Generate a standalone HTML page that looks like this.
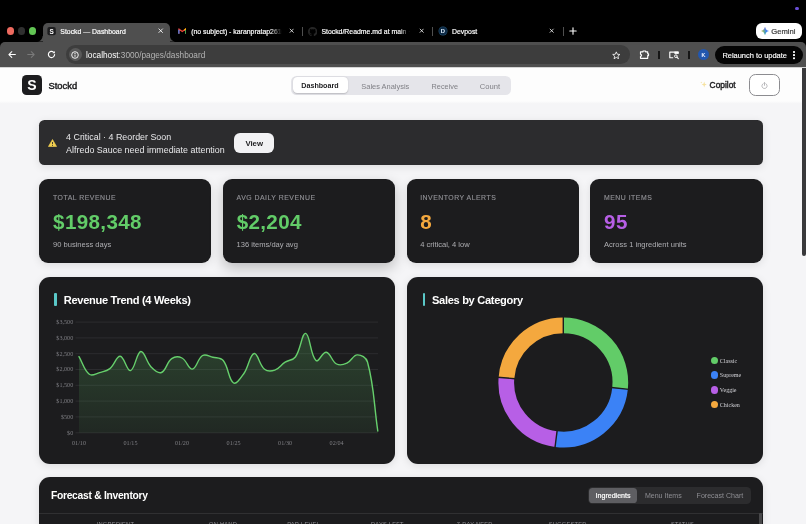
<!DOCTYPE html>
<html><head><meta charset="utf-8"><title>Stockd — Dashboard</title>
<style>
*{box-sizing:border-box;margin:0;padding:0}
html,body{width:806px;height:524px;overflow:hidden;background:#f5f5f7;font-family:"Liberation Sans",sans-serif;}
#root{position:relative;width:806px;height:524px;overflow:hidden;background:#f5f5f7}
.abs{position:absolute}
.t{position:absolute;white-space:nowrap;line-height:1}
#txt{position:absolute;left:0;top:0;width:806px;height:524px;will-change:transform;pointer-events:none}
/* chrome */
#topblack{left:0;top:0;width:806px;height:50px;background:#000}
#toolbar{left:0;top:42px;width:806px;height:25.5px;background:#4f4f4f;border-top-left-radius:5px;border-top-right-radius:5px}
#tab{left:42.8px;top:23.3px;width:127.2px;height:21.7px;background:#4f4f4f;border-radius:5px 5px 0 0}
.tabtxt{font-size:6.9px;color:#fff;top:28.9px;-webkit-text-stroke:.18px #fff}
.tl{position:absolute;width:7.4px;height:7.4px;border-radius:50%;top:27.2px}
#urlpill{left:66px;top:45.4px;width:564px;height:18.6px;border-radius:9.3px;background:#3d3d3d}
/* page */
#header{left:0;top:67px;width:806px;height:35.6px;background:#fdfdfd}
.card{position:absolute;background:#1c1c1e;border-radius:9px;top:179px;height:84px;width:172px;box-shadow:0 2px 8px rgba(0,0,0,.10)}
.lbl{font-size:6.9px;letter-spacing:.5px;color:#929297;top:194.6px;-webkit-text-stroke:.12px #929297}
.val{font-size:20.6px;font-weight:bold;top:211.6px;letter-spacing:0.35px}
.sub{font-size:7.55px;color:#aeaeb2;top:241.1px}
.panel{position:absolute;background:#1c1c1e;border-radius:11px;box-shadow:0 2px 8px rgba(0,0,0,.10)}
.ptitle{font-size:11.1px;font-weight:bold;color:#fff;top:294.6px;letter-spacing:-.32px}
.bar{position:absolute;width:2.3px;height:13.4px;top:292.7px;background:#5ac8c8;border-radius:1px}
.ax{font-family:"Liberation Serif",serif;font-size:6.15px;color:#7f7f84}
.lg{font-family:"Liberation Serif",serif;font-size:6px;color:#d1d1d6}
.dot{position:absolute;width:7.4px;height:7.4px;border-radius:50%;left:710.9px}
.th{font-size:5.7px;letter-spacing:.24px;color:#8e8e93;top:522.4px}
</style></head><body><div id="root">

<!-- ===== browser chrome ===== -->
<div class="abs" id="topblack"></div>
<div class="abs" style="left:795.2px;top:6.7px;width:3.8px;height:3.8px;border-radius:50%;background:#6a4fd8"></div>
<div class="abs" id="tab"></div>
<!-- tab flares -->
<svg class="abs" style="left:37.4px;top:36.4px" width="6.6" height="5.6" viewBox="0 0 7 6"><path d="M6 0 H7 V6 H0 A6 6 0 0 0 6 0Z" fill="#4f4f4f"/></svg>
<svg class="abs" style="left:168.8px;top:36.4px" width="6.6" height="5.6" viewBox="-1 0 7 6"><path d="M0 0 H-1 V6 H6 A6 6 0 0 1 0 0Z" fill="#4f4f4f"/></svg>
<div class="abs" id="toolbar"></div>
<!-- tab 1 -->
<svg class="abs" style="left:40px;top:20px" width="20" height="20" viewBox="40 20 20 20"><rect x="47.4" y="27.1" width="8.4" height="8.1" rx="1.9" fill="#1d1d1f"/></svg>
<svg class="abs" style="left:158.2px;top:28.4px" width="5.4" height="5.4" viewBox="0 0 6 6"><path d="M1 1 L5 5 M5 1 L1 5" stroke="#fff" stroke-width=".95" stroke-linecap="round"/></svg>
<!-- tab 2 gmail -->
<svg class="abs" style="left:177.7px;top:28.1px" width="8.6" height="6.5" viewBox="0 0 10 8"><path d="M0.8 7.2 V1.2 L5 4.4 L9.2 1.2 V7.2" fill="none" stroke="#ea4335" stroke-width="1.5" stroke-linejoin="round"/><path d="M0.8 7.2 V2" stroke="#4285f4" stroke-width="1.5"/><path d="M9.2 7.2 V2" stroke="#34a853" stroke-width="1.5"/><path d="M9.2 2.6 V1.2 L7.6 2.4" stroke="#fbbc04" stroke-width="1.4" fill="none"/></svg>
<svg class="abs" style="left:288.9px;top:28.4px" width="5.4" height="5.4" viewBox="0 0 6 6"><path d="M1.2 1.2 L4.8 4.8 M4.8 1.2 L1.2 4.8" stroke="#f0f0f0" stroke-width=".9" stroke-linecap="round"/></svg>
<div class="abs" style="left:301.5px;top:27px;width:1px;height:9px;background:#4f4f4f"></div>
<!-- tab 3 github -->
<svg class="abs" style="left:307.5px;top:26.6px" width="9.4" height="9.4" viewBox="0 0 16 16"><path fill="#262626" d="M8 0C3.58 0 0 3.58 0 8c0 3.54 2.29 6.53 5.47 7.59.4.07.55-.17.55-.38 0-.19-.01-.82-.01-1.49-2.01.37-2.53-.49-2.69-.94-.09-.23-.48-.94-.82-1.13-.28-.15-.68-.52-.01-.53.63-.01 1.08.58 1.23.82.72 1.21 1.87.87 2.33.66.07-.52.28-.87.51-1.07-1.78-.2-3.64-.89-3.64-3.95 0-.87.31-1.59.82-2.15-.08-.2-.36-1.02.08-2.12 0 0 .67-.21 2.2.82.64-.18 1.32-.27 2-.27s1.36.09 2 .27c1.53-1.04 2.2-.82 2.2-.82.44 1.1.16 1.92.08 2.12.51.56.82 1.27.82 2.15 0 3.07-1.87 3.75-3.65 3.95.29.25.54.73.54 1.48 0 1.07-.01 1.93-.01 2.2 0 .21.15.46.55.38A8.01 8.01 0 0016 8c0-4.42-3.58-8-8-8z"/></svg>
<svg class="abs" style="left:419.1px;top:28.4px" width="5.4" height="5.4" viewBox="0 0 6 6"><path d="M1.2 1.2 L4.8 4.8 M4.8 1.2 L1.2 4.8" stroke="#f0f0f0" stroke-width=".9" stroke-linecap="round"/></svg>
<div class="abs" style="left:431.5px;top:27px;width:1px;height:9px;background:#4f4f4f"></div>
<!-- tab 4 devpost -->
<div class="abs" style="left:439px;top:27.3px;width:7.8px;height:7.8px;border-radius:50%;background:#0d2b47;box-shadow:0 0 0 .5px #24506f"></div>
<svg class="abs" style="left:549.4px;top:28.4px" width="5.4" height="5.4" viewBox="0 0 6 6"><path d="M1.2 1.2 L4.8 4.8 M4.8 1.2 L1.2 4.8" stroke="#f0f0f0" stroke-width=".9" stroke-linecap="round"/></svg>
<div class="abs" style="left:562.5px;top:27px;width:1px;height:9px;background:#4f4f4f"></div>
<svg class="abs" style="left:568.5px;top:27px" width="8" height="8" viewBox="0 0 8 8"><path d="M4 0.8 V7.2 M0.8 4 H7.2" stroke="#fff" stroke-width="1.1" stroke-linecap="round"/></svg>
<!-- gemini -->
<div class="abs" style="left:755.8px;top:23.3px;width:46.2px;height:15.6px;border-radius:6px;background:#fff"></div>
<svg class="abs" style="left:761px;top:27px" width="8" height="8" viewBox="0 0 10 10"><defs><linearGradient id="gg" x1="0" y1="0" x2="1" y2="0"><stop offset="0" stop-color="#e2c64a"/><stop offset=".38" stop-color="#6fb08a"/><stop offset=".62" stop-color="#3f86f3"/><stop offset="1" stop-color="#3b7cf5"/></linearGradient><linearGradient id="gt" x1="0" y1="0" x2="0" y2="1"><stop offset="0" stop-color="#7b5be0"/><stop offset=".5" stop-color="#6a6be8" stop-opacity="0"/></linearGradient><linearGradient id="gb" x1="0" y1="1" x2="0" y2="0"><stop offset="0" stop-color="#35a8a0"/><stop offset=".45" stop-color="#35a8a0" stop-opacity="0"/></linearGradient></defs><path d="M5 0 C5.7 2.8 7.2 4.3 10 5 C7.2 5.7 5.7 7.2 5 10 C4.3 7.2 2.8 5.7 0 5 C2.8 4.3 4.3 2.8 5 0Z" fill="url(#gg)"/><path d="M5 0 C5.7 2.8 7.2 4.3 10 5 C7.2 5.7 5.7 7.2 5 10 C4.3 7.2 2.8 5.7 0 5 C2.8 4.3 4.3 2.8 5 0Z" fill="url(#gt)"/><path d="M5 0 C5.7 2.8 7.2 4.3 10 5 C7.2 5.7 5.7 7.2 5 10 C4.3 7.2 2.8 5.7 0 5 C2.8 4.3 4.3 2.8 5 0Z" fill="url(#gb)"/></svg>

<!-- toolbar content -->
<svg class="abs" style="left:8.2px;top:50.9px" width="8.1" height="7.2" viewBox="0 0 9 8"><path d="M4.2 0.8 L1 4 L4.2 7.2 M1 4 H8.2" fill="none" stroke="#fff" stroke-width="1.15" stroke-linecap="round" stroke-linejoin="round"/></svg>
<svg class="abs" style="left:27.4px;top:50.9px" width="8.1" height="7.2" viewBox="0 0 9 8"><path d="M4.8 0.8 L8 4 L4.8 7.2 M8 4 H0.8" fill="none" stroke="#7a7a7a" stroke-width="1.15" stroke-linecap="round" stroke-linejoin="round"/></svg>
<svg class="abs" style="left:46.5px;top:50px" width="9" height="9" viewBox="0 0 9 9"><path d="M7.6 4.5 A3.1 3.1 0 1 1 6.5 2.1" fill="none" stroke="#fff" stroke-width="1.15" stroke-linecap="round"/><path d="M7.9 0.9 V3.2 H5.6 Z" fill="#fff"/></svg>
<div class="abs" id="urlpill"></div>
<div class="abs" style="left:68.8px;top:48.2px;width:13px;height:13px;border-radius:50%;background:#595959"></div>
<svg class="abs" style="left:71.3px;top:50.7px" width="8" height="8" viewBox="0 0 8 8"><circle cx="4" cy="4" r="3.3" fill="none" stroke="#fff" stroke-width=".9"/><path d="M4 3.6 V5.8" stroke="#fff" stroke-width=".9"/><circle cx="4" cy="2.4" r=".55" fill="#fff"/></svg>
<svg class="abs" style="left:612.3px;top:50.7px" width="8.6" height="8.6" viewBox="0 0 10 10"><path d="M5 1 L6.2 3.8 L9.2 4 L6.9 6 L7.6 9 L5 7.4 L2.4 9 L3.1 6 L0.8 4 L3.8 3.8 Z" fill="none" stroke="#fff" stroke-width=".95" stroke-linejoin="round"/></svg>
<svg class="abs" style="left:0;top:0" width="806" height="70" viewBox="0 0 806 70"><g fill="none" stroke="#fff" stroke-width="1.15" stroke-linejoin="round"><path d="M640.5 51.8 H643 V50.95 H645.6 V51.8 H647.7 V53.8 H648.55 V55.6 H647.7 V58.3 H640.5 V56.3 A1 1 0 0 0 640.5 54.2 Z"/><path d="M673.2 57.7 H669.8 V52.1 H678.1 V53.6"/><circle cx="675.9" cy="56.2" r="1.35" stroke-width=".95"/><path d="M676.9 57.2 L678.3 58.6" stroke-linecap="round" stroke-width="1.1"/></g><rect x="674.4" y="51.6" width="4.2" height="2.3" fill="#fff"/></svg>
<div class="abs" style="left:658.4px;top:50.9px;width:1.2px;height:8.6px;background:#161616"></div>

<div class="abs" style="left:688.4px;top:50.9px;width:1.2px;height:8.6px;background:#161616"></div>
<div class="abs" style="left:698.2px;top:49.2px;width:11px;height:11px;border-radius:50%;background:#2257ae"></div>
<div class="abs" style="left:715.4px;top:45.9px;width:87.8px;height:18.6px;border-radius:9.3px;background:#050505"></div>
<div class="abs" style="left:793px;top:51px;width:2.1px;height:2.1px;border-radius:.7px;background:#fff;box-shadow:0 3.1px 0 #fff,0 6.2px 0 #fff"></div>

<!-- ===== page ===== -->
<div class="abs" id="header"></div>
<div class="abs" style="left:0;top:67px;width:806px;height:1px;background:#d4d4d4"></div>
<div class="abs" style="left:0;top:101px;width:806px;height:2.6px;background:linear-gradient(#fdfdfd,#f4f4f6)"></div>
<div class="abs" style="left:21.8px;top:75px;width:20px;height:19.8px;border-radius:4.6px;background:#1d1d1f"></div>
<!-- nav -->
<div class="abs" style="left:291px;top:75.6px;width:220.4px;height:19.4px;border-radius:5.5px;background:#e5e5ea"></div>
<div class="abs" style="left:292.8px;top:77.4px;width:55.6px;height:15.8px;border-radius:4.2px;background:#fff;box-shadow:0 .5px 1.5px rgba(0,0,0,.18)"></div>
<!-- copilot -->
<div class="abs" style="left:690px;top:76px;width:55px;height:18.5px;border-radius:5px;background:#fdfdfd"></div>
<svg class="abs" style="left:700.2px;top:81.4px" width="7" height="7" viewBox="0 0 7 7"><path d="M4.2 .6 L4.9 2.8 L6.8 3.6 L4.9 4.3 L4.2 6.6 L3.5 4.3 L1.6 3.6 L3.5 2.8 Z" fill="#f6e2a0"/><path d="M1.3 .4 L1.6 1.2 L2.4 1.5 L1.6 1.8 L1.3 2.6 L1 1.8 L.2 1.5 L1 1.2Z" fill="#f6e2a0"/></svg>
<div class="abs" style="left:749.2px;top:74.3px;width:30.9px;height:21.5px;border-radius:6.6px;border:1px solid #8c8c90;background:#fff"></div>
<svg class="abs" style="left:761.2px;top:81.9px" width="7" height="7" viewBox="0 0 7 7"><path d="M2.2 1.6 A2.6 2.6 0 1 0 4.8 1.6" fill="none" stroke="#9a9a9e" stroke-width=".7" stroke-linecap="round"/><path d="M3.5 .5 V3.3" stroke="#9a9a9e" stroke-width=".7" stroke-linecap="round"/></svg>

<!-- alert -->
<div class="abs" style="left:39px;top:120px;width:724px;height:45px;border-radius:5.5px;background:#2c2c2e;box-shadow:0 2px 8px rgba(0,0,0,.10)"></div>
<svg class="abs" style="left:47.6px;top:138.8px" width="9" height="8" viewBox="0 0 9 8"><path d="M4.5 .5 L8.6 7.5 H.4 Z" fill="#f3d050" stroke="#f3d050" stroke-width=".6" stroke-linejoin="round"/><path d="M4.5 3 V5.2" stroke="#2c2c2e" stroke-width=".9"/><circle cx="4.5" cy="6.4" r=".5" fill="#2c2c2e"/></svg>
<div class="abs" style="left:233.9px;top:133.2px;width:40px;height:20.1px;border-radius:6px;background:#f2f2f4"></div>

<!-- stat cards -->
<div class="card" style="left:39px"></div>
<div class="card" style="left:223px;box-shadow:0 5px 14px rgba(0,0,0,.24)"></div>
<div class="card" style="left:407px"></div>
<div class="card" style="left:590.4px;width:172.6px"></div>

<!-- chart panels -->
<div class="panel" style="left:39px;top:277px;width:355.6px;height:187px"></div>
<div class="panel" style="left:407.4px;top:277px;width:355.6px;height:187px"></div>
<div class="bar" style="left:54.3px"></div>
<div class="bar" style="left:422.7px"></div>

<svg class="abs" style="left:0;top:0" width="806" height="524" viewBox="0 0 806 524">
<defs><linearGradient id="ag" x1="0" y1="333" x2="0" y2="433" gradientUnits="userSpaceOnUse"><stop offset="0" stop-color="#62cc68" stop-opacity=".225"/><stop offset="1" stop-color="#62cc68" stop-opacity=".07"/></linearGradient></defs>
<g stroke="#38383a" stroke-width=".6">
<path d="M75.5 322.1 H378 M75.5 337.9 H378 M75.5 353.7 H378 M75.5 369.5 H378 M75.5 385.3 H378 M75.5 401.1 H378 M75.5 416.9 H378 M75.5 432.8 H378"/>
</g>
<path d="M79.0 356.7 C83.1 363.7 83.9 370.1 89.3 374.3 C92.1 376.5 95.6 373.7 99.6 372.6 C103.8 371.4 106.5 371.3 109.9 368.6 C114.8 364.7 116.3 355.9 120.2 356.3 C124.5 356.7 126.8 371.5 130.5 370.6 C135.1 369.5 136.4 352.3 140.8 351.5 C144.6 350.8 146.1 361.8 151.1 367.0 C154.3 370.2 158.1 373.9 161.4 372.5 C166.3 370.5 166.6 362.2 171.7 358.6 C174.8 356.4 178.7 356.3 182.0 358.0 C186.9 360.5 188.5 369.6 192.3 369.1 C196.7 368.6 197.5 358.5 202.6 355.5 C205.8 353.7 208.9 356.2 212.9 357.2 C217.1 358.2 220.7 357.4 223.2 360.5 C229.0 367.7 228.3 379.7 233.6 383.0 C236.5 384.9 240.7 378.0 243.9 373.5 C248.9 366.2 249.7 354.4 254.2 353.5 C257.9 352.7 259.1 364.9 264.5 369.2 C267.4 371.6 271.1 371.4 274.8 370.2 C279.4 368.6 280.7 365.0 285.1 362.2 C288.9 359.7 292.8 360.6 295.4 357.0 C301.1 349.0 301.8 332.7 305.7 333.4 C310.0 334.1 310.3 355.3 316.0 360.5 C318.6 362.9 322.5 351.7 326.3 352.3 C330.8 353.1 331.6 361.4 336.6 364.0 C339.9 365.7 343.3 364.8 346.9 363.2 C351.5 361.2 353.0 355.1 357.2 354.9 C361.2 354.7 366.2 357.4 367.5 362.0 C374.5 387.8 373.7 403.4 377.8 431.0 L377.8 432.8 L79 432.8 Z" fill="url(#ag)"/>
<path d="M79.0 356.7 C83.1 363.7 83.9 370.1 89.3 374.3 C92.1 376.5 95.6 373.7 99.6 372.6 C103.8 371.4 106.5 371.3 109.9 368.6 C114.8 364.7 116.3 355.9 120.2 356.3 C124.5 356.7 126.8 371.5 130.5 370.6 C135.1 369.5 136.4 352.3 140.8 351.5 C144.6 350.8 146.1 361.8 151.1 367.0 C154.3 370.2 158.1 373.9 161.4 372.5 C166.3 370.5 166.6 362.2 171.7 358.6 C174.8 356.4 178.7 356.3 182.0 358.0 C186.9 360.5 188.5 369.6 192.3 369.1 C196.7 368.6 197.5 358.5 202.6 355.5 C205.8 353.7 208.9 356.2 212.9 357.2 C217.1 358.2 220.7 357.4 223.2 360.5 C229.0 367.7 228.3 379.7 233.6 383.0 C236.5 384.9 240.7 378.0 243.9 373.5 C248.9 366.2 249.7 354.4 254.2 353.5 C257.9 352.7 259.1 364.9 264.5 369.2 C267.4 371.6 271.1 371.4 274.8 370.2 C279.4 368.6 280.7 365.0 285.1 362.2 C288.9 359.7 292.8 360.6 295.4 357.0 C301.1 349.0 301.8 332.7 305.7 333.4 C310.0 334.1 310.3 355.3 316.0 360.5 C318.6 362.9 322.5 351.7 326.3 352.3 C330.8 353.1 331.6 361.4 336.6 364.0 C339.9 365.7 343.3 364.8 346.9 363.2 C351.5 361.2 353.0 355.1 357.2 354.9 C361.2 354.7 366.2 357.4 367.5 362.0 C374.5 387.8 373.7 403.4 377.8 431.0" fill="none" stroke="#66cf6c" stroke-width="1.4" stroke-linejoin="round" stroke-linecap="round"/>
<!-- donut -->
<g transform="translate(563.3 382.5)" fill="none" stroke-width="15.7">
<path d="M0.00 -57.05 A57.05 57.05 0 0 1 56.74 5.96" stroke="#62cc68"/>
<path d="M56.74 5.96 A57.05 57.05 0 0 1 -7.25 56.59" stroke="#3b82f6"/>
<path d="M-7.25 56.59 A57.05 57.05 0 0 1 -56.87 -4.48" stroke="#b75fe6"/>
<path d="M-56.87 -4.48 A57.05 57.05 0 0 1 -0.00 -57.05" stroke="#f4a83e"/>
<path d="M0.00 -48.50 L0.00 -66.00" stroke="#1c1c1e" stroke-width="1.4"/>
<path d="M48.23 5.07 L65.64 6.90" stroke="#1c1c1e" stroke-width="1.4"/>
<path d="M-6.16 48.11 L-8.39 65.47" stroke="#1c1c1e" stroke-width="1.4"/>
<path d="M-48.35 -3.81 L-65.80 -5.18" stroke="#1c1c1e" stroke-width="1.4"/>

</g>
</svg>

<!-- legend -->
<div class="dot" style="top:356.6px;background:#62cc68"></div>
<div class="dot" style="top:371.4px;background:#3b82f6"></div>
<div class="dot" style="top:386.2px;background:#b75fe6"></div>
<div class="dot" style="top:401px;background:#f4a83e"></div>

<!-- bottom panel -->
<div class="panel" style="left:39px;top:477.4px;width:724px;height:80px;border-radius:11px"></div>
<div class="abs" style="left:588px;top:486.8px;width:163px;height:17px;border-radius:4.5px;background:#2c2c2e"></div>
<div class="abs" style="left:589.2px;top:488px;width:47.8px;height:14.6px;border-radius:3.6px;background:#5e5e62"></div>
<div class="abs" style="left:39px;top:512.6px;width:724px;height:.6px;background:#303032"></div>
<div class="abs" style="left:758.6px;top:513.4px;width:3.4px;height:20px;background:#48484a;border-radius:1px"></div>

<!-- page scrollbar -->
<div class="abs" style="left:801.8px;top:67.6px;width:4.2px;height:188px;background:#3a3a3c;border-radius:0 0 2px 2px"></div>
<div id="txt">
<div class="tl" style="left:6.8px;background:#ee6a5f"></div>
<div class="tl" style="left:17.7px;background:#2f2f2f"></div>
<div class="tl" style="left:28.7px;background:#62c554"></div>
<div class="t" style="left:49.6px;top:29px;font-size:6.4px;font-weight:bold;color:#fff">S</div>
<div class="t tabtxt" style="left:60.3px">Stockd — Dashboard</div>
<div class="t tabtxt" style="left:191.2px;width:92px;overflow:hidden;-webkit-mask-image:linear-gradient(90deg,#000 86%,transparent 99%);mask-image:linear-gradient(90deg,#000 86%,transparent 99%)">(no subject) - karanpratap2610</div>
<div class="t tabtxt" style="left:321.4px;width:89px;overflow:hidden;-webkit-mask-image:linear-gradient(90deg,#000 88%,transparent 100%);mask-image:linear-gradient(90deg,#000 88%,transparent 100%)">Stockd/Readme.md at main · k</div>
<div class="t" style="left:440.8px;top:28.5px;font-size:5.9px;font-weight:bold;color:#dcebfa">D</div>
<div class="t tabtxt" style="left:452px">Devpost</div>
<div class="t" style="left:771.2px;top:27.5px;font-size:7.65px;color:#3a3a3a;-webkit-text-stroke:.2px #3a3a3a">Gemini</div>
<div class="t" style="left:86px;top:51.6px;font-size:8.25px;color:#fff">localhost<span style="color:#b4b4b4">:3000/pages/dashboard</span></div>
<div class="t" style="left:701.5px;top:52.6px;font-size:5.7px;color:#f0f4ff;-webkit-text-stroke:.2px #f0f4ff">K</div>
<div class="t" style="left:722.4px;top:51.7px;font-size:7.45px;color:#fff;-webkit-text-stroke:.15px #fff">Relaunch to update</div>
<div class="t" style="left:27.3px;top:78.1px;font-size:14px;font-weight:bold;color:#fff">S</div>
<div class="t" style="left:48.5px;top:80.8px;font-size:9.4px;color:#1d1d1f;-webkit-text-stroke:.45px #1d1d1f">Stockd</div>
<div class="t" style="left:301.3px;top:82.8px;font-size:7.15px;font-weight:bold;color:#1d1d1f">Dashboard</div>
<div class="t" style="left:361.3px;top:82.8px;font-size:7.45px;color:#808086">Sales Analysis</div>
<div class="t" style="left:431.6px;top:82.8px;font-size:7.3px;color:#808086">Receive</div>
<div class="t" style="left:479.8px;top:82.8px;font-size:7.6px;color:#808086">Count</div>
<div class="t" style="left:709.6px;top:81.2px;font-size:8.4px;color:#1d1d1f;-webkit-text-stroke:.4px #1d1d1f">Copilot</div>
<div class="t" style="left:66.1px;top:133.2px;font-size:8.9px;color:#e8e8ea">4 Critical · 4 Reorder Soon</div>
<div class="t" style="left:66.1px;top:146.1px;font-size:8.9px;letter-spacing:.02px;color:#e8e8ea">Alfredo Sauce need immediate attention</div>
<div class="t" style="left:245.4px;top:140px;font-size:7.8px;font-weight:bold;color:#1d1d1f">View</div>
<div class="t lbl" style="left:53px">TOTAL REVENUE</div>
<div class="t val" style="left:53.1px;color:#62cc68">$198,348</div>
<div class="t sub" style="left:53px">90 business days</div>
<div class="t lbl" style="left:236.6px">AVG DAILY REVENUE</div>
<div class="t val" style="left:236.7px;color:#62cc68">$2,204</div>
<div class="t sub" style="left:236.6px">136 items/day avg</div>
<div class="t lbl" style="left:420.2px">INVENTORY ALERTS</div>
<div class="t val" style="left:420.3px;color:#f4a83e">8</div>
<div class="t sub" style="left:420.2px">4 critical, 4 low</div>
<div class="t lbl" style="left:604px">MENU ITEMS</div>
<div class="t val" style="left:604.1px;color:#b75fe6">95</div>
<div class="t sub" style="left:604px">Across 1 ingredient units</div>
<div class="t ptitle" style="left:63.8px">Revenue Trend (4 Weeks)</div>
<div class="t ptitle" style="left:432px">Sales by Category</div>
<div class="t ax" style="right:732.8px;top:318.9px">$3,500</div>
<div class="t ax" style="right:732.8px;top:334.7px">$3,000</div>
<div class="t ax" style="right:732.8px;top:350.5px">$2,500</div>
<div class="t ax" style="right:732.8px;top:366.3px">$2,000</div>
<div class="t ax" style="right:732.8px;top:382.1px">$1,500</div>
<div class="t ax" style="right:732.8px;top:398.0px">$1,000</div>
<div class="t ax" style="right:732.8px;top:413.8px">$500</div>
<div class="t ax" style="right:732.8px;top:429.6px">$0</div>
<div class="t ax" style="left:79.0px;top:439.6px;transform:translateX(-50%)">01/10</div>
<div class="t ax" style="left:130.5px;top:439.6px;transform:translateX(-50%)">01/15</div>
<div class="t ax" style="left:182.0px;top:439.6px;transform:translateX(-50%)">01/20</div>
<div class="t ax" style="left:233.6px;top:439.6px;transform:translateX(-50%)">01/25</div>
<div class="t ax" style="left:285.1px;top:439.6px;transform:translateX(-50%)">01/30</div>
<div class="t ax" style="left:336.6px;top:439.6px;transform:translateX(-50%)">02/04</div>
<div class="t lg" style="left:719.8px;top:357.6px">Classic</div>
<div class="t lg" style="left:719.8px;top:372.4px">Supreme</div>
<div class="t lg" style="left:719.8px;top:387.2px">Veggie</div>
<div class="t lg" style="left:719.8px;top:402px">Chicken</div>
<div class="t" style="left:50.9px;top:491.4px;font-size:10.3px;font-weight:bold;color:#fff;letter-spacing:-.28px">Forecast &amp; Inventory</div>
<div class="t" style="left:595.6px;top:492px;font-size:7.05px;color:#fff;-webkit-text-stroke:.2px #fff">Ingredients</div>
<div class="t" style="left:644.9px;top:492px;font-size:7.05px;color:#8e8e93">Menu Items</div>
<div class="t" style="left:696.6px;top:492px;font-size:7.05px;color:#8e8e93">Forecast Chart</div>
<div class="t th" style="left:96.7px">INGREDIENT</div>
<div class="t th" style="left:209.1px">ON HAND</div>
<div class="t th" style="left:287.2px">PAR LEVEL</div>
<div class="t th" style="left:371px">DAYS LEFT</div>
<div class="t th" style="left:456.7px">7-DAY NEED</div>
<div class="t th" style="left:548.8px">SUGGESTED</div>
<div class="t th" style="left:670.9px">STATUS</div>
</div>
</div></body></html>
